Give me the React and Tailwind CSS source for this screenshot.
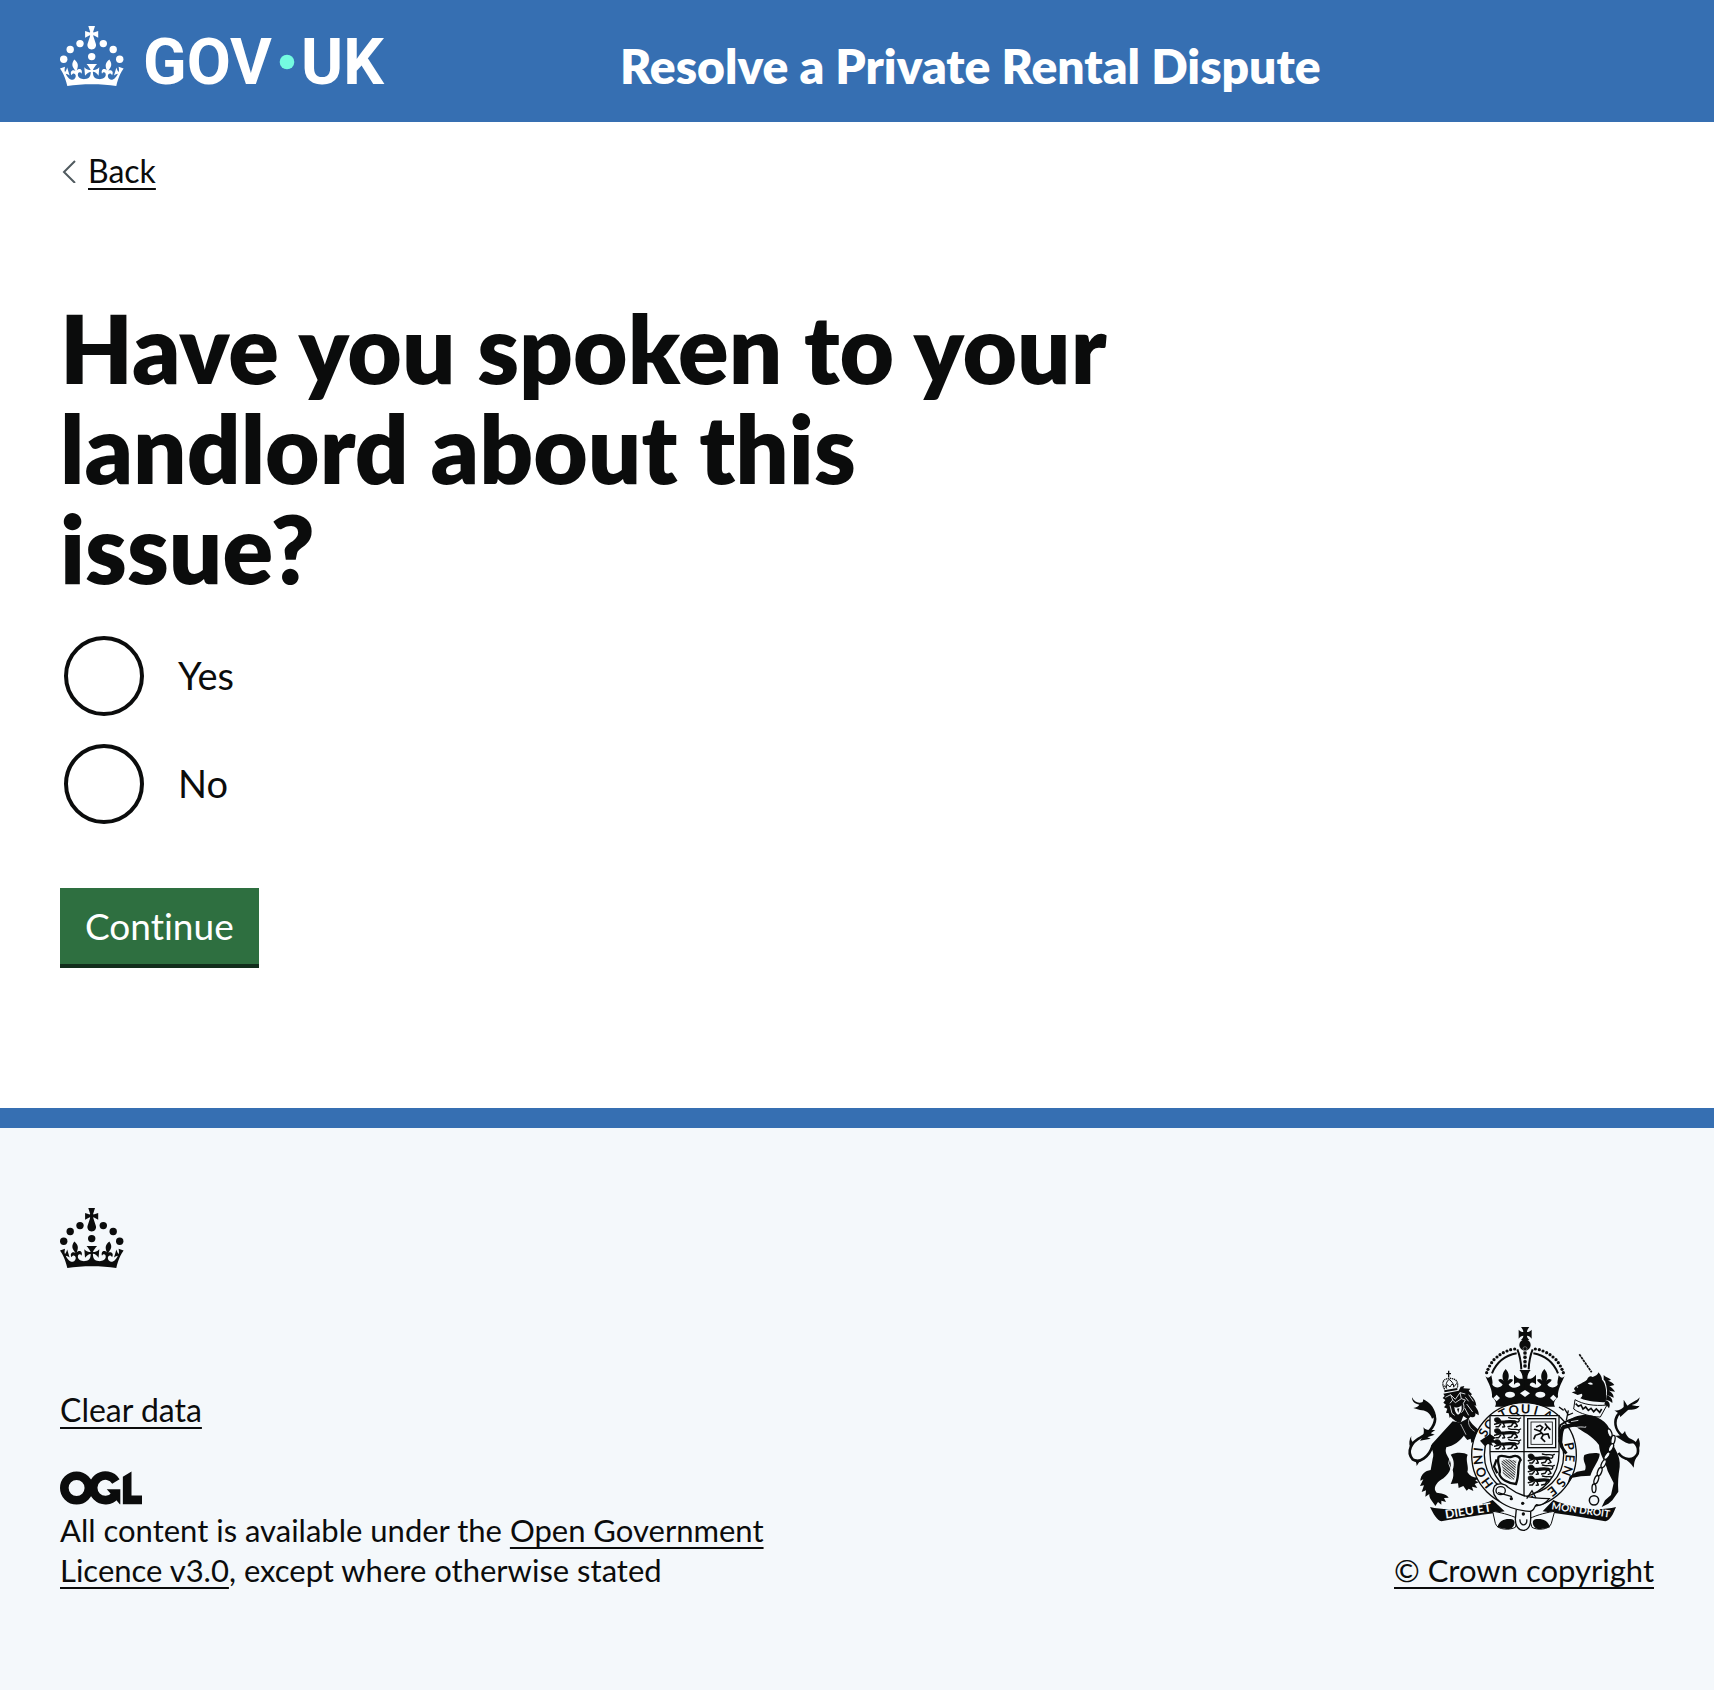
import React from "react";

const CROWN_PATH =
  "M33.1,9.8c.2-.1.3-.3.5-.5l4.6,2.4v-6.8l-4.6,1.5c-.1-.2-.3-.3-.5-.5l1.9-5.9h-6.7l1.9,5.9c-.2.1-.3.3-.5.5l-4.6-1.5v6.8l4.6-2.4c.1.2.3.3.5.5l-2.6,8c-.9,2.8,1.2,5.7,4.1,5.7h0c3,0,5.1-2.9,4.1-5.7l-2.6-8ZM37,37.9s-3.4,3.8-4.1,6.1c2.2,0,4.2-.5,6.4-2.8l-.7,8.5c-2-2.8-4.4-4.1-5.7-3.8.1,3.1.5,6.7,5.8,7.2,3.7.3,6.7-1.5,7-3.8.4-2.6-2-4.3-3.7-1.6-1.4-4.5,2.4-6.1,4.9-3.2-1.9-4.5-1.8-7.7,2.4-10.9,3,4,2.6,7.3-1.2,11.1,2.4-1.3,6.2,0,4,4.6-1.2-2.8-3.7-2.2-4.2.2-.3,1.7.7,3.7,3,4.2,1.9.3,4.7-.9,7-5.9-1.3,0-2.4.7-3.9,1.7l2.4-8c.6,2.3,1.4,3.7,2.2,4.5.6-1.6.5-2.8,0-5.3l5,1.8c-2.6,3.6-5.2,8.7-7.3,17.5-7.4-1.1-15.7-1.7-24.5-1.7h0c-8.8,0-17.1.6-24.5,1.7-2.1-8.9-4.7-13.9-7.3-17.5l5-1.8c-.5,2.5-.6,3.7,0,5.3.8-.8,1.6-2.3,2.2-4.5l2.4,8c-1.5-1-2.6-1.7-3.9-1.7,2.3,5,5.2,6.2,7,5.9,2.3-.4,3.3-2.4,3-4.2-.5-2.4-3-3.1-4.2-.2-2.2-4.6,1.6-6,4-4.6-3.7-3.7-4.2-7.1-1.2-11.1,4.2,3.2,4.3,6.4,2.4,10.9,2.5-2.8,6.3-1.3,4.9,3.2-1.8-2.7-4.1-1-3.7,1.6.3,2.3,3.3,4.1,7,3.8,5.4-.5,5.7-4.2,5.8-7.2-1.3-.2-3.7,1-5.7,3.8l-.7-8.5c2.2,2.3,4.2,2.7,6.4,2.8-.7-2.3-4.1-6.1-4.1-6.1h10.6,0Z";

const PEARLS = [
  [20, 17.6],
  [10.2, 23.5],
  [3.7, 33.2],
  [31.7, 30.6],
  [43.3, 17.6],
  [53.2, 23.5],
  [59.7, 33.2],
];

function CrownShapes() {
  return (
    <g>
      {PEARLS.map(([x, y]) => (
        <circle key={`${x}-${y}`} cx={x} cy={y} r="3.7" />
      ))}
      <path d={CROWN_PATH} />
    </g>
  );
}

function GovUkLogo() {
  return (
    <svg viewBox="0 0 330 62" className="h-[62px] w-[330px] overflow-visible" fill="currentColor" role="img" aria-label="GOV.UK">
      <CrownShapes />
      <g className="font-[Roboto,sans-serif] text-[64px] font-bold">
        <text x="83" y="58">GOV</text>
        <text x="241" y="58">UK</text>
      </g>
      <circle cx="227" cy="36" r="7.3" fill="#74fbe0" />
    </svg>
  );
}

function OglLogo() {
  return (
    <svg viewBox="0 0 484 196" className="h-[34px] w-[82px]" role="img" aria-label="Open Government Licence">
      <g fill="none" stroke="currentColor" strokeWidth="51">
        <circle cx="98" cy="98" r="72.5" />
        <path d="M330 59 A72.5 72.5 0 1 0 325 142" />
      </g>
      <path fill="currentColor" d="M276 106H356V194H353L334 172L276 106ZM371 32L422 0V143H484V194H371Z" />
    </svg>
  );
}

const BG = "#f4f8fb";

const ARCH_PEARLS = [
  [404, 117], [392, 119], [381, 123], [370, 128], [360, 134], [351, 141], [342, 149], [335, 158], [329, 168], [324, 178], [320, 188],
];

const MOTTO = [
  ["H", 233], ["O", 248], ["N", 264], ["I", 277], ["S", 299], ["O", 312], ["T", 333], ["Q", 347], ["U", 2], ["I", 15], ["A", 31],
  ["P", 79], ["E", 94], ["N", 110], ["S", 127], ["E", 142], ["Y", 169],
];

function HalfCrown() {
  return (
    <g>
      {ARCH_PEARLS.map(([x, y]) => (
        <circle key={x} cx={x} cy={y} r="4.8" />
      ))}
      <path d="M410 130C378 136 350 156 336 190" fill="none" stroke="currentColor" strokeWidth="6" />
      <path d="M412 118C419 135 423 155 424 178" fill="none" stroke="currentColor" strokeWidth="6" />
      <path d="M316 198C322 206 328 204 334 196C336 208 339 216 337 224C346 236 360 234 368 224C364 217 358 218 355 209C362 205 368 208 371 213C365 200 367 188 377 177C387 188 389 200 383 213C386 208 392 205 399 209C396 218 390 217 386 224C394 236 410 236 421 226C420 216 410 214 402 224V194C410 204 420 208 428 206C428 195 424 186 418 180H436V290H345C352 280 345 268 336 262C338 240 326 220 316 198Z" />
    </g>
  );
}

function Passant({ x, y }) {
  return (
    <g transform={`translate(${x} ${y})`} fill="none" stroke="currentColor" strokeLinecap="round" strokeLinejoin="round">
      <path d="M5 3C12 -1 21 2 21 9C20 17 9 18 5 12Z" fill="currentColor" strokeWidth="3" />
      <path d="M18 12C30 19 42 9 64 14" strokeWidth="10" />
      <path d="M18 17L4 21M22 20L16 28L8 28M30 18L34 28L28 29M60 17L54 26L44 28M66 16L72 26L64 29" strokeWidth="4.5" />
      <path d="M68 13C76 16 80 10 76 5C72 1 62 4 54 3L46 1M76 5L82 2" strokeWidth="4" />
    </g>
  );
}

function Lion() {
  return (
    <g transform="translate(60 150)">
      <g fill="none" stroke="currentColor">
        <path d="M146 32V52M139 41H153" strokeWidth="4" />
        <path d="M134 88C124 72 128 58 142 56C146 54 150 54 154 56C168 56 176 66 172 84" strokeWidth="4" strokeDasharray="4 2" />
        <path d="M140 86C136 74 140 64 147 58C156 64 162 72 161 82M131 76L138 82L142 74L150 81L156 72L163 79L170 70" strokeWidth="3" />
        <path d="M133 94L172 87" strokeWidth="6" />
      </g>
      <path d="M130 101L176 92L182 80L193 78L190 85L211 86L206 92L216 103L212 106C222 115 228 125 229 138L223 135C231 146 238 155 236 166L226 160C228 170 220 175 212 170L204 178L190 168L182 188C172 188 160 180 152 170L149 174L146 160L138 158L142 146L132 142L138 134L130 128L136 120L128 114L134 108Z" />
      <g fill="none" stroke={BG} strokeWidth="2.5">
        <path d="M136 112L152 104L166 118L180 98L196 102M152 104L158 120L150 130M180 98L184 116L196 120L190 130M158 120L166 128L184 116" />
        <path d="M150 136L156 160L164 166M196 112L206 124M190 130C194 142 192 150 184 158M200 132L218 156M194 144L206 166M206 104L220 124" />
      </g>
      <path d="M163 140C170 145 180 142 184 136C188 150 180 164 174 164C167 160 164 152 163 140Z" fill={BG} />
      <path d="M171 146L178 145L175 159Z" />
      <path d="M158 184L96 252C88 262 106 276 98 296L92 330C76 332 62 344 61 362L70 358L60 378L72 376L65 396L78 391L76 410L88 402C86 415 98 424 106 438L114 426L124 434L124 422L138 426L132 414L146 413C138 400 122 400 110 398C98 386 108 370 122 360C146 345 158 325 150 302C142 286 132 276 140 262C158 258 182 245 196 220L184 188Z" />
      <path d="M140 262C136 276 148 280 150 292L146 310L154 330" fill="none" stroke={BG} strokeWidth="2.5" />
      <path d="M152 284C170 275 195 278 203 284C195 300 208 320 202 336C210 350 225 355 238 352L226 362L236 367L224 372L232 384L216 380L220 393L206 386L200 392L190 378L176 384L174 370L152 372C160 355 162 345 158 330C165 310 160 295 152 284Z" />
      <path d="M176 190L206 174C212 192 232 206 246 218C262 226 284 240 280 250L270 246L276 258L264 254L264 264L252 256L244 262L240 252L228 254L226 244L214 248L212 236L202 240C190 228 184 212 176 190Z" />
      <path d="M207 178C202 190 210 206 224 214M182 192L198 224M246 236L262 250M252 230L270 244" fill="none" stroke={BG} strokeWidth="2" />
      <path d="M98 256C88 290 58 312 38 298C18 276 34 246 62 232C92 216 110 190 104 168C98 152 80 146 58 142" fill="none" stroke="currentColor" strokeWidth="8" />
      <path d="M36 112C42 126 56 132 68 126L70 118C84 124 104 140 108 168L96 176C90 158 76 150 60 150L40 144C50 142 56 138 58 134C46 132 36 126 36 112ZM70 202C80 214 92 210 106 210L92 220L104 224L82 232L92 236L60 242C70 230 74 218 70 202ZM34 228C32 240 36 246 44 248L30 262C26 250 28 238 34 228ZM42 296L60 302L50 318C50 308 46 302 42 296Z" />
    </g>
  );
}

function Unicorn() {
  return (
    <g transform="translate(525 105)">
      <path d="M73 28L110 82" stroke="currentColor" strokeWidth="5" strokeDasharray="8 2" />
      <path d="M112 96C120 95 130 88 130 82C138 90 141 98 141 104C154 116 156 146 152 172C130 172 100 170 76 160C82 154 84 150 80 146L68 150L50 142L62 139L57 132C60 120 82 116 96 104C98 96 108 90 112 96Z" />
      <path d="M98 115C104 111 112 113 114 118C108 120 102 119 98 115ZM64 124L70 125L67 129Z" fill={BG} />
      <g fill="currentColor">
        <path d="M146 90C152 98 162 98 168 104L152 110L146 104ZM150 108C162 106 172 112 178 120L164 124L154 122ZM154 122C166 122 174 130 180 140L166 138L156 136ZM156 136C168 138 176 148 176 158L166 154L156 150ZM155 150C166 154 174 162 172 174L164 168L153 164ZM152 166C162 168 168 178 162 190L156 182L148 178Z" />
      </g>
      <path d="M60 164C84 178 116 184 156 180L136 216C110 216 74 206 56 192Z" fill={BG} stroke="currentColor" strokeWidth="3" />
      <path d="M62 176L70 184L78 180L84 192L92 186L100 196L108 190L116 200L124 192L134 202L140 192" fill="none" stroke="currentColor" strokeWidth="5" />
      <path d="M38 232C52 212 84 206 112 212C152 222 172 252 170 286C176 312 198 330 194 366C190 392 188 412 190 440L172 466L160 476L140 486L150 466L168 450L176 414L158 378C152 350 134 330 132 300C110 270 84 262 60 244Z" />
      <g fill="none" stroke="currentColor" strokeLinejoin="round">
        <path d="M92 240C70 236 46 240 26 246C16 256 18 270 16 290" strokeWidth="12" />
        <path d="M70 222C46 218 30 232 16 240C10 252 14 262 14 276" strokeWidth="6" />
        <path d="M14 286L20 306L34 326" strokeWidth="9" />
      </g>
      <path d="M56 250C80 240 96 252 92 244M48 230L70 226" fill="none" stroke={BG} strokeWidth="2.5" />
      <path d="M88 330C100 324 126 322 134 326C134 346 116 362 106 392L78 394L52 398L36 420L44 394L66 380L90 376C98 358 80 350 88 330Z" />
      <path d="M28 190L40 210L54 204M26 196L12 186M40 196L34 226" fill="none" stroke="currentColor" strokeWidth="4" />
      {[
        [164, 264, -20], [174, 284, 10], [168, 308, 25], [156, 332, 35], [146, 356, 25], [134, 380, 20], [124, 404, 20], [117, 430, 0],
      ].map(([x, y, a]) => (
        <ellipse key={y} cx={x} cy={y} rx="6" ry="13" transform={`rotate(${a} ${x} ${y})`} fill={BG} stroke="currentColor" strokeWidth="4" />
      ))}
      <circle cx="117" cy="466" r="14" fill={BG} stroke="currentColor" strokeWidth="4.5" />
      <path d="M190 324C206 346 236 350 248 326C254 300 238 288 216 282C190 268 178 246 182 224C188 200 212 190 232 186" fill="none" stroke="currentColor" strokeWidth="8" />
      <path d="M254 157C252 170 244 178 230 180C244 184 250 184 254 182C248 194 232 194 220 194L196 216C194 206 186 202 178 196C190 198 198 194 206 186L206 164C212 172 214 178 218 182C228 172 246 168 254 157ZM180 272C194 274 204 268 210 258C212 270 220 276 228 286L248 294L222 296C208 292 196 282 180 272ZM250 278C256 292 256 300 252 310L242 292ZM206 340L244 338C236 350 238 360 236 368C228 356 220 348 206 340Z" />
    </g>
  );
}

function RoyalArms() {
  return (
    <svg viewBox="57 51 750 612" className="h-[204px] w-[250px]" fill="currentColor" aria-hidden="true">
      <defs>
        <clipPath id="shield-shape">
          <path d="M330 317H537V430C537 500 490 545 432 562C375 545 330 500 330 430Z" />
        </clipPath>
        <pattern id="harp-strings" width="6" height="6" patternUnits="userSpaceOnUse" patternTransform="rotate(-50)">
          <rect width="2.5" height="6" fill="currentColor" />
        </pattern>
      </defs>

      <HalfCrown />
      <g transform="translate(870 0) scale(-1 1)">
        <HalfCrown />
      </g>
      <path d="M423 51H448C444 56 441 61 441 66C446 66 451 63 455 59V86C451 80 446 77 441 77C441 82 444 86 448 90H423C427 86 430 82 430 77C425 77 420 80 416 86V59C420 63 425 66 430 66C430 61 427 56 423 51Z" />
      <circle cx="435" cy="105" r="17" />
      {[116, 129, 142, 155, 168].map((y) => (
        <circle key={y} cx="435" cy={y} r="6" stroke={BG} strokeWidth="1" />
      ))}
      <g fill={BG}>
        <path d="M420 250L435 240L450 250L435 261Z" />
        <ellipse cx="390" cy="254" rx="15" ry="9" />
        <ellipse cx="481" cy="254" rx="15" ry="9" />
        <path d="M340 264L350 254L360 264L350 274ZM510 264L520 254L530 264L520 274Z" />
      </g>

      <path d="M150 591C210 606 290 592 338 570L374 604C318 614 250 622 184 634C172 632 160 612 150 591ZM708 591C650 606 570 592 520 570L488 604C546 612 612 622 676 634C690 632 700 612 708 591Z" />
      <path d="M338 604L346 640C352 662 392 660 406 652L414 626C390 614 356 606 338 604ZM524 604L514 640C508 662 468 660 456 652L448 626C472 614 506 606 524 604Z" fill={BG} stroke="currentColor" strokeWidth="3" />
      <path d="M352 652C356 634 374 624 396 628C410 632 404 656 384 658ZM510 652C506 634 488 624 466 628C452 632 458 656 478 658Z" />
      <Lion />
      <circle cx="432" cy="435" r="157" fill={BG} stroke="currentColor" strokeWidth="4" />
      <circle cx="432" cy="435" r="119" fill="none" stroke="currentColor" strokeWidth="4" />
      <g className="font-[Lato,sans-serif] text-[38px] font-bold" textAnchor="middle">
        {MOTTO.map(([c, a]) => (
          <text key={`${c}${a}`} x="432" y="310" transform={`rotate(${a} 432 435)`}>
            {c}
          </text>
        ))}
      </g>

      <g clipPath="url(#shield-shape)">
        <rect x="330" y="317" width="207" height="250" fill={BG} />
        <Passant x={340} y={322} />
        <Passant x={340} y={355} />
        <Passant x={340} y={388} />
        <Passant x={441} y={431} />
        <Passant x={441} y={464} />
        <Passant x={441} y={497} />
        <g fill="none" stroke="currentColor">
          <rect x="443" y="326" width="84" height="87" strokeWidth="4" />
          <rect x="453" y="336" width="64" height="67" strokeWidth="2.5" />
          <path d="M470 350L480 346L488 352L480 364L490 374L484 384L494 394M480 364L464 358M484 370L466 376L462 386M490 374L504 372L508 384M494 360L502 350L496 342M502 350L510 358" strokeWidth="5" strokeLinecap="round" />
          <path d="M330 425H537M432 317V562" strokeWidth="4" />
          <path d="M356 440C370 432 380 446 396 440C408 434 420 440 422 450C410 462 420 490 408 522C384 520 362 508 358 492C366 476 348 462 356 440Z" strokeWidth="7" fill={BG} />
          <path d="M350 448L342 470L352 490" strokeWidth="7" />
        </g>
        <path d="M366 450C384 444 400 452 410 452C404 470 410 490 402 510C386 506 372 500 368 488C372 474 360 464 366 450Z" fill="url(#harp-strings)" />
      </g>
      <path d="M330 317H537V430C537 500 490 545 432 562C375 545 330 500 330 430Z" fill="none" stroke="currentColor" strokeWidth="4" />

      <g fill={BG} stroke="currentColor" strokeWidth="4">
        <path d="M410 586H452V628C452 650 442 661 430 661C416 661 406 648 406 628Z" />
        <path d="M420 628C418 650 444 650 440 628" fill="none" />
        <path d="M344 528C352 518 376 520 384 532C410 552 440 566 508 566C496 580 482 588 470 584C460 590 466 604 448 604C410 602 370 588 350 566C338 552 338 538 344 528Z" />
        <ellipse cx="362" cy="542" rx="14" ry="12" />
        <path d="M354 548L396 560M440 566L456 542L468 564" fill="none" />
      </g>
      <circle cx="394" cy="566" r="5" />
      <circle cx="428" cy="580" r="5" />
      <circle cx="430" cy="612" r="5" />

      <Unicorn />
      <path d="M330 372L348 384L340 388L350 398L334 398L340 408L324 402L314 408L300 392Z" />

      <g fill={BG} className="font-[Lato,sans-serif] font-bold">
        <text x="197" y="626" className="text-[37px]" transform="rotate(-9 197 626)">DIEU ET</text>
        <text x="514" y="598" className="text-[30px]" transform="rotate(8 514 598)">MON DROIT</text>
      </g>
    </svg>
  );
}

function TextLink({ children }) {
  return (
    <a href="#" className="underline decoration-2 underline-offset-[5px] [text-decoration-skip-ink:none]">
      {children}
    </a>
  );
}

function RadioOption({ id, label }) {
  return (
    <div className="flex items-center gap-[34px]">
      <input
        type="radio"
        id={id}
        name="spoken-to-landlord"
        value={id}
        className="size-20 shrink-0 appearance-none rounded-full border-4 border-[#0b0c0c] checked:shadow-[inset_0_0_0_16px_white] checked:bg-[#0b0c0c]"
      />
      <label htmlFor={id} className="pb-0.5 text-[38px] leading-[50px]">
        {label}
      </label>
    </div>
  );
}

export default function App() {
  return (
    <div className="min-h-screen bg-white font-[Lato,'Liberation_Sans',sans-serif] text-[31px] leading-10 text-[#0b0c0c] [font-variant-ligatures:none]">
      <header className="flex items-start bg-[#366fb2] px-[60px] py-[26px] text-white">
        <a href="#" className="w-[35%]">
          <GovUkLogo />
        </a>
        <a href="#" className="pt-2.5 pl-0.5 text-5xl leading-[60px] font-extrabold">
          Resolve a Private Rental Dispute
        </a>
      </header>

      <main className="px-[60px] pt-[29px] pb-[140px]">
        <div className="flex items-center text-[32px]">
          <svg viewBox="0 0 28 24" className="h-6 w-7" fill="none" stroke="#505a5f" strokeWidth="2" aria-hidden="true">
            <path d="M15 2L4 13L15 24" />
          </svg>
          <TextLink>Back</TextLink>
        </div>

        <form onSubmit={(e) => e.preventDefault()}>
          <fieldset className="mt-[107px]">
            <legend className="w-2/3">
              <h1 className="text-[94px] leading-[100px] font-extrabold">Have you spoken to your landlord about this issue?</h1>
            </legend>
            <div className="mt-[38px] flex flex-col gap-7 pl-1">
              <RadioOption id="yes" label="Yes" />
              <RadioOption id="no" label="No" />
            </div>
          </fieldset>
          <button
            type="submit"
            className="mt-16 mb-1 block h-[76px] bg-[#2e6f40] px-[25px] text-[37px] text-white shadow-[0_4px_0_#122d1c]"
          >
            Continue
          </button>
        </form>
      </main>

      <footer className="border-t-20 border-[#366fb2] bg-[#f4f8fb] px-[60px] pt-20 pb-[100px]">
        <svg viewBox="0 0 64 60" className="h-[60px] w-16" fill="currentColor" aria-hidden="true">
          <CrownShapes />
        </svg>
        <div className="mt-[59px] flex items-end justify-between">
          <div className="w-1/2">
            <div className="text-[32px]">
              <TextLink>Clear data</TextLink>
            </div>
            <div className="mt-[41px] mb-[5px]">
              <OglLogo />
            </div>
            <p>
              All content is available under the <TextLink>Open Government Licence v3.0</TextLink>, except where otherwise stated
            </p>
          </div>
          <div className="flex flex-col items-center gap-[19px]">
            <RoyalArms />
            <TextLink>© Crown copyright</TextLink>
          </div>
        </div>
      </footer>
    </div>
  );
}
